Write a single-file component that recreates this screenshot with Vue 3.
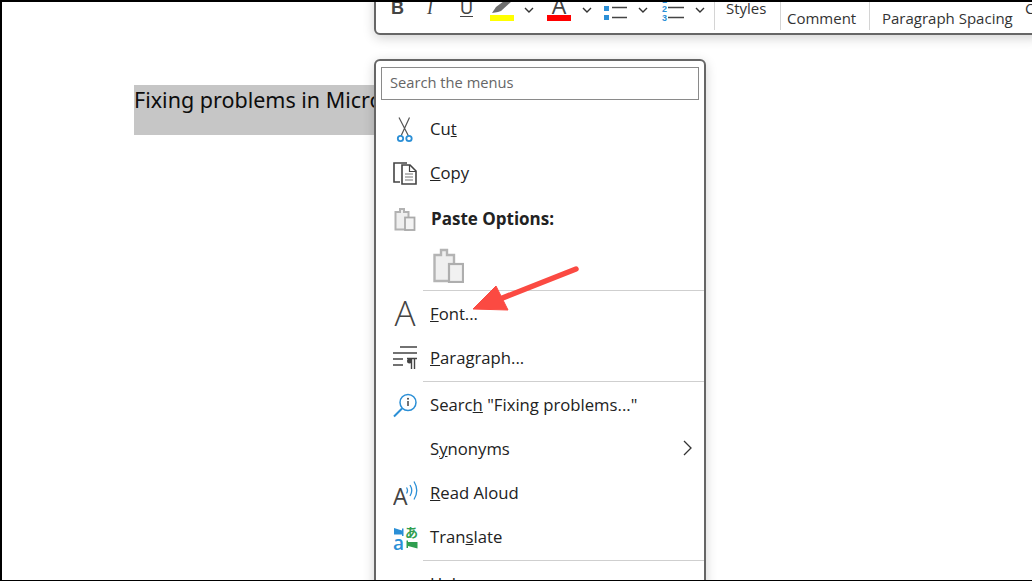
<script setup>
</script>

<template>
  <div class="page">
    <div class="doc">
      <div class="selection">Fixing problems in Microsoft Word</div>
    </div>

    <div class="toolbar">
      <div class="tool-icons">
        <span class="glyph bold">B</span>
        <span class="glyph italic">I</span>
        <span class="glyph under">U</span>
        <span class="colour">
          <svg width="24" height="16" viewBox="0 0 24 16">
            <path d="M2 15 L6 9 L18 0 L22 3 L11 13 L8 14 Z" fill="#6e6e6e" />
            <path d="M18 0 L23 -2" stroke="#6e6e6e" stroke-width="2" />
          </svg>
          <i class="swatch yellow"></i>
        </span>
        <svg class="chev" width="10" height="6" viewBox="0 0 10 6"><path d="M1 1l4 4 4-4" fill="none" stroke="#333" stroke-width="1.4" /></svg>
        <span class="colour font-colour">
          <span class="a-letter">A</span>
          <i class="swatch red"></i>
        </span>
        <svg class="chev gap-a" width="10" height="6" viewBox="0 0 10 6"><path d="M1 1l4 4 4-4" fill="none" stroke="#333" stroke-width="1.4" /></svg>
        <svg class="list" width="24" height="20" viewBox="0 0 24 20">
          <rect x="0" y="2" width="5" height="5" fill="#2b8fd6" />
          <rect x="0" y="11" width="5" height="5" fill="#2b8fd6" />
          <path d="M8 3.500h15M8 13.500h15" stroke="#444" stroke-width="1.3" />
        </svg>
        <svg class="chev" width="10" height="6" viewBox="0 0 10 6"><path d="M1 1l4 4 4-4" fill="none" stroke="#333" stroke-width="1.4" /></svg>
        <span class="numbers">
          <span class="nums"><b>1</b><b>2</b><b>3</b></span>
          <svg width="16" height="20" viewBox="0 0 16 20"><path d="M0 3.500h16M0 13.500h16" stroke="#444" stroke-width="1.3" /></svg>
        </span>
        <svg class="chev gap-a" width="10" height="6" viewBox="0 0 10 6"><path d="M1 1l4 4 4-4" fill="none" stroke="#333" stroke-width="1.4" /></svg>
      </div>
      <div class="cell styles">Styles</div>
      <div class="cell comment">Comment</div>
      <div class="cell spacing">Paragraph Spacing</div>
      <div class="cell tail">C</div>
    </div>

    <div class="menu">
      <div class="search">Search the menus</div>

      <div class="row">
        <span class="ico">
          <svg width="18" height="27" viewBox="0 0 18 27">
            <path d="M3 1.500 L12.500 20M13.500 1.500 L5 20" stroke="#555" stroke-width="1.200" fill="none" />
            <circle cx="4.500" cy="22.500" r="2.700" fill="none" stroke="#2b8fd6" stroke-width="1.800" />
            <circle cx="13" cy="22.500" r="2.700" fill="none" stroke="#2b8fd6" stroke-width="1.800" />
          </svg>
        </span>
        <span class="label">Cu<u>t</u></span>
      </div>

      <div class="row">
        <span class="ico">
          <svg width="24" height="23" viewBox="0 0 24 23">
            <path d="M7 20H1V1H14" fill="none" stroke="#444" stroke-width="1.600" />
            <path d="M9 3H17L23 9V22H9Z" fill="#fff" stroke="#444" stroke-width="1.600" />
            <path d="M16.500 3V9.500H23" fill="none" stroke="#444" stroke-width="1.200" />
            <path d="M12 12H20M12 15H20M12 18H20" stroke="#777" stroke-width="1.100" />
          </svg>
        </span>
        <span class="label"><u>C</u>opy</span>
      </div>

      <div class="row paste-row">
        <span class="ico">
          <svg width="22" height="24" viewBox="0 0 22 24">
            <path d="M1.500 5H6V2H10V5H14.500V22.500H1.500Z" fill="#efefef" stroke="#b2b2b2" stroke-width="2" />
            <rect x="11" y="10.500" width="9.500" height="12.500" fill="#f3f3f3" stroke="#aaa" stroke-width="1.800" />
          </svg>
        </span>
        <span class="label strong">Paste Options:</span>
      </div>

      <div class="paste-big">
        <svg width="31" height="35" viewBox="0 0 31 35">
          <path d="M1.500 7H8V2H14V7H21V33H1.500Z" fill="#efefef" stroke="#b4b4b4" stroke-width="2.400" />
          <rect x="16" y="16" width="14" height="18" fill="#f1f1f1" stroke="#aeaeae" stroke-width="2.200" />
        </svg>
      </div>

      <div class="divider"></div>

      <div class="row">
        <span class="ico big-a">A</span>
        <span class="label"><u>F</u>ont...</span>
      </div>

      <div class="row">
        <span class="ico">
          <svg width="24" height="24" viewBox="0 0 24 24">
            <path d="M7 1H24M0 7H24M0 13H10M0 19H10" stroke="#444" stroke-width="1.300" />
            <path d="M14 12.500H24M18.500 12.500V23M21.500 12.500V23" stroke="#444" stroke-width="1.400" fill="none" />
            <circle cx="16.500" cy="15" r="2.500" fill="#444" />
          </svg>
        </span>
        <span class="label"><u>P</u>aragraph...</span>
      </div>

      <div class="divider tight"></div>

      <div class="row">
        <span class="ico">
          <svg width="25" height="25" viewBox="0 0 25 25">
            <circle cx="15" cy="9.500" r="8" fill="none" stroke="#2b8fd6" stroke-width="1.500" />
            <path d="M9 15.500 L1 23.500" stroke="#2b8fd6" stroke-width="2" />
            <path d="M15 8V13" stroke="#444" stroke-width="1.500" />
            <circle cx="15" cy="5.800" r="1" fill="#444" />
          </svg>
        </span>
        <span class="label">Searc<u>h</u> "Fixing problems..."</span>
      </div>

      <div class="row">
        <span class="ico"></span>
        <span class="label">S<u>y</u>nonyms</span>
        <svg class="caret" width="9" height="16" viewBox="0 0 9 16"><path d="M1 1l7 7-7 7" fill="none" stroke="#333" stroke-width="1.300" /></svg>
      </div>

      <div class="row">
        <span class="ico">
          <svg width="25" height="26" viewBox="0 0 25 26">
            <text x="0" y="25" class="read-a">A</text>
            <path d="M13.500 7.500q2 3 0 6M17 5q3.500 5.500 0 11M21 1.500q5.500 9 0 18" fill="none" stroke="#2b8fd6" stroke-width="1.300" />
          </svg>
        </span>
        <span class="label"><u>R</u>ead Aloud</span>
      </div>

      <div class="row">
        <span class="ico">
          <svg width="25" height="25" viewBox="0 0 25 25">
            <path d="M1 3L9 5.500V3.500H10.500V11H9V9.500H1Z" fill="#2b8fd6" />
            <text x="0" y="24.500" class="tr-a">a</text>
            <text x="12" y="11.500" class="tr-j">あ</text>
            <path d="M24.500 23.500L15 21V23H13.500V15.500H15V17H24.500Z" fill="#2f9e4f" />
          </svg>
        </span>
        <span class="label">Tran<u>s</u>late</span>
      </div>

      <div class="divider tight"></div>

      <div class="row">
        <span class="ico">
          <svg class="help" width="18" height="20" viewBox="0 0 18 20"><rect x="1" y="1" width="16" height="15" rx="5" fill="none" stroke="#444" stroke-width="1.500" /></svg>
        </span>
        <span class="label"><u>H</u>elp</span>
      </div>
    </div>

    <svg class="arrow" width="120" height="56" viewBox="0 0 120 56">
      <path d="M109 5 L28 37" stroke="#fb4a42" stroke-width="5.500" stroke-linecap="round" />
      <path d="M6 45 L29 22 L41 46 Z" fill="#fb4a42" stroke="#fb4a42" stroke-width="1" stroke-linejoin="round" />
    </svg>
  </div>
</template>

<style scoped>
.page {
  position: relative;
  width: 1032px;
  height: 581px;
  box-sizing: border-box;
  overflow: hidden;
  background: #fff;
  border-top: 2px solid #000;
  border-left: 2px solid #000;
  border-bottom: 1px solid #000;
  font-family: "Open Sans", "Noto Sans", sans-serif;
  color: #222;
}

.doc {
  padding: 83px 0 0 132px;
}

.selection {
  width: 420px;
  height: 50px;
  box-sizing: border-box;
  background: #c6c6c6;
  color: #0d0d0d;
  font-family: "Noto Sans", sans-serif;
  font-size: 21.500px;
  line-height: 30px;
  white-space: nowrap;
  overflow: hidden;
}

.toolbar {
  position: absolute;
  left: 372px;
  top: -10px;
  right: -10px;
  height: 43px;
  box-sizing: border-box;
  display: flex;
  align-items: stretch;
  background: #fff;
  border: 2px solid #666;
  border-radius: 6px;
  box-shadow: 0 3px 12px rgba(0, 0, 0, 0.18);
}

.tool-icons {
  width: 338px;
  flex: none;
  display: flex;
  align-items: flex-start;
  padding-left: 15px;
  box-sizing: border-box;
}

.glyph {
  font-family: "Liberation Sans", sans-serif;
  font-size: 18px;
  color: #444;
  line-height: 20px;
  margin-top: 4px;
}

.bold { font-weight: 700; width: 36px; }
.italic { font-style: italic; width: 33px; font-family: "Liberation Serif", serif; }
.under { width: 30px; text-decoration: underline; text-underline-offset: 2px; }

.colour {
  position: relative;
  width: 24px;
  height: 30px;
  display: block;
  flex: none;
}

.colour svg {
  display: block;
  margin-top: 4px;
  overflow: visible;
}

.swatch {
  position: absolute;
  left: 0;
  top: 21px;
  width: 24px;
  height: 6px;
  display: block;
}

.yellow { background: #ffff00; }
.red { background: #ff0000; }

.font-colour { margin-left: 13px; }

.a-letter {
  display: block;
  text-align: center;
  font-size: 23px;
  line-height: 22px;
  color: #444;
}

.chev {
  margin: 13px 0 0 10px;
  flex: none;
}

.chev.gap-a { margin-left: 11px; }

.list {
  margin: 10px 0 0 12px;
  flex: none;
}

.numbers {
  display: flex;
  flex: none;
  margin-left: 14px;
  margin-top: 10px;
}

.nums {
  display: flex;
  flex-direction: column;
  width: 6px;
  margin-top: -8px;
  font-family: "Liberation Sans", sans-serif;
  font-size: 9px;
  line-height: 9px;
  color: #2b8fd6;
}

.nums b { display: block; }

.cell {
  font-size: 15px;
  line-height: 20px;
  color: #333;
  white-space: nowrap;
  box-sizing: border-box;
  border-left: 1px solid #d4d4d4;
  flex: none;
  height: 36px;
  padding-top: 14px;
}

.styles {
  width: 66px;
  padding-left: 11px;
  padding-top: 4px;
}

.comment {
  width: 89px;
  padding-left: 6px;
}

.spacing {
  width: 149px;
  padding-left: 12px;
}

.tail {
  border-left: 0;
  padding-top: 4px;
  padding-left: 7px;
}

.menu {
  position: absolute;
  left: 372px;
  top: 57px;
  width: 332px;
  height: 560px;
  box-sizing: border-box;
  background: #fff;
  border: 2px solid #666;
  border-radius: 6px;
  padding: 6px 5px 0;
  box-shadow: 0 3px 12px rgba(0, 0, 0, 0.18);
}

.search {
  height: 33px;
  box-sizing: border-box;
  border: 1px solid #8a8a8a;
  padding: 0 8px;
  font-size: 14.700px;
  line-height: 29px;
  color: #666;
  margin: 0 0 7px;
}

.row {
  height: 44px;
  margin: 0 -5px;
  display: flex;
  align-items: center;
  position: relative;
}

.ico {
  width: 54px;
  flex: none;
  display: flex;
  justify-content: center;
  padding-left: 4px;
  box-sizing: border-box;
  align-items: center;
}

.label {
  font-size: 16.700px;
  color: #222;
  white-space: nowrap;
  margin-bottom: 2px;
}

.strong {
  font-weight: 700;
  font-size: 17px;
  margin-left: 1px;
}

.paste-row { margin-top: 2px; }

.paste-big {
  height: 49px;
  padding-left: 57px;
  margin: 0 -5px;
  display: flex;
  align-items: center;
}

.divider {
  height: 1px;
  background: #cfcfcf;
  margin: 0 -5px 1px 42px;
}

.divider.tight {
  margin-top: 1px;
}

.big-a {
  font-size: 35px;
  line-height: 44px;
  color: #444;
  font-weight: 300;
  margin-top: -2px;
}

.caret {
  position: absolute;
  right: 12px;
  top: 13px;
}

.help {
  align-self: flex-start;
  margin: 14px 6px 0 0;
}

.read-a {
  font-family: "Open Sans", sans-serif;
  font-size: 23px;
  fill: #444;
}

.tr-a {
  font-family: "Open Sans", sans-serif;
  font-size: 19px;
  font-weight: 600;
  fill: #2b8fd6;
}

.tr-j {
  font-family: "Noto Sans CJK JP", sans-serif;
  font-size: 13px;
  font-weight: 700;
  fill: #2f9e4f;
}

.arrow {
  position: absolute;
  left: 465px;
  top: 262px;
}
</style>
